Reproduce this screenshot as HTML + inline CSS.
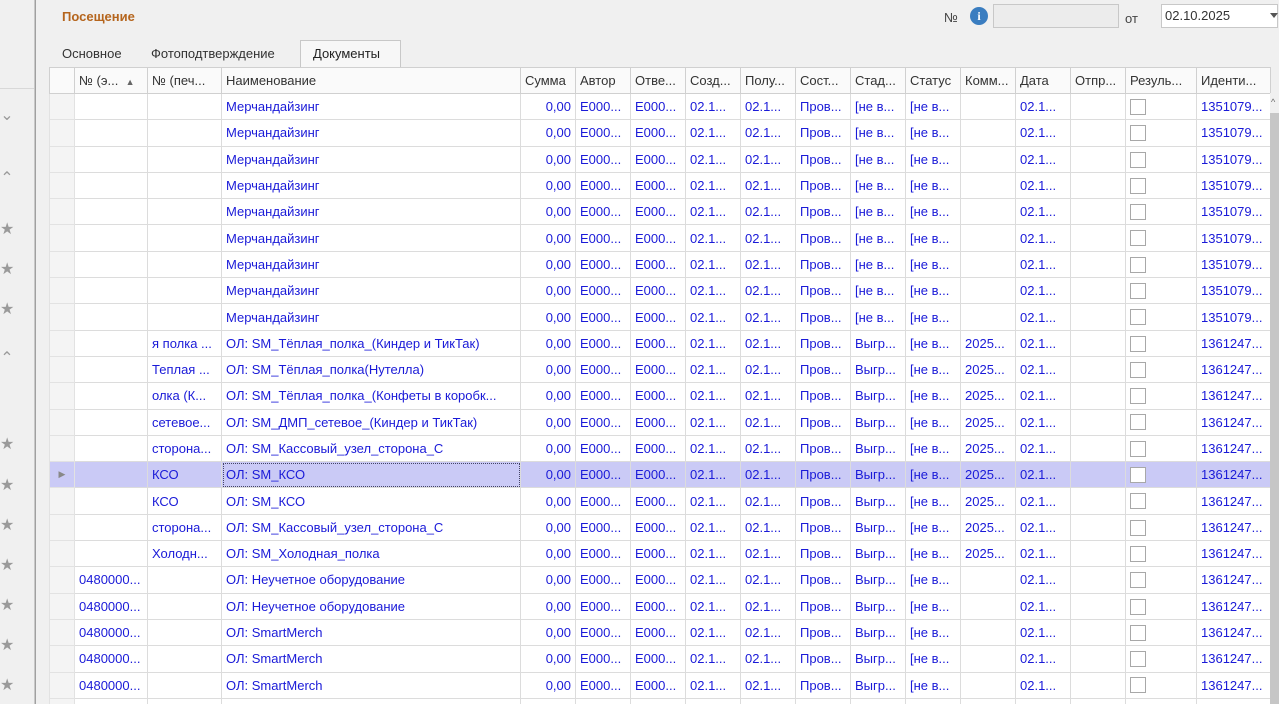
<!DOCTYPE html>
<html><head><meta charset="utf-8"><style>
html,body{margin:0;width:1279px;height:704px;overflow:hidden}
body{background:#f0f0f0;font-family:"Liberation Sans",sans-serif;font-size:13px;position:relative}
.side{position:absolute;left:0;top:0;width:34px;height:704px;background:#f0f0f0;border-right:1px solid #c8c8c8}
.side2{position:absolute;left:35px;top:0;width:1px;height:704px;background:#a0a0a0}
.ic{position:absolute;left:0;width:14px;text-align:center;color:#9a9a9a;font-size:16px}
.title{position:absolute;left:62px;top:9px;color:#b5651d;font-weight:bold;font-size:13px}
.lbl{position:absolute;color:#444}
.inp{position:absolute;background:#ececec;border:1px solid #c8c8c8}
.tab{position:absolute;top:41px;height:25px;line-height:25px;color:#333}
table{position:absolute;left:49px;top:67px;border-collapse:collapse;table-layout:fixed;width:1221px;background:#fff}
td,th{height:25.3px;border:1px solid #dcdcdc;padding:0 4px;white-space:nowrap;overflow:hidden;color:#1a1ad8;font-weight:normal;text-align:left}
th{background:#fafafa;color:#333;height:25px;border-color:#d0d0d0}
td.r{text-align:right}
td.h{background:#f4f4f4;border-color:#e2e2e2}
tr.sel td{background:#cacaf6}
tr.sel td.h{background:#cacaf6}
.cb{display:inline-block;width:14px;height:14px;border:1px solid #a8a8a8;background:#fff;vertical-align:middle}
.sb{position:absolute;left:1270px;top:93px;width:9px;height:611px;background:#f0f0f0}
.th{position:absolute;left:1270px;top:113px;width:9px;height:591px;background:#c6c6c6}
</style></head><body>
<div class="side"></div><div class="side2"></div>
<div class="ic" style="top:105px">&#8964;</div>
<div class="ic" style="top:168px">&#8963;</div>
<div class="ic" style="top:219px">★</div><div class="ic" style="top:259px">★</div><div class="ic" style="top:299px">★</div>
<div class="ic" style="top:348px">&#8963;</div>
<div class="ic" style="top:434px">★</div><div class="ic" style="top:475px">★</div><div class="ic" style="top:515px">★</div><div class="ic" style="top:555px">★</div><div class="ic" style="top:595px">★</div><div class="ic" style="top:635px">★</div><div class="ic" style="top:675px">★</div>
<div style="position:absolute;left:0;top:88px;width:34px;height:1px;background:#d8d8d8"></div>
<div class="title">Посещение</div>
<div class="lbl" style="left:944px;top:10px">№</div>
<div style="position:absolute;left:970px;top:7px;width:18px;height:18px;border-radius:50%;background:#3a7dc0;color:#fff;font-weight:bold;font-size:12px;text-align:center;line-height:18px;font-family:'Liberation Serif',serif">i</div>
<div class="inp" style="left:993px;top:4px;width:124px;height:22px"></div>
<div class="lbl" style="left:1125px;top:11px">от</div>
<div class="inp" style="left:1161px;top:4px;width:112px;height:22px;background:#fff;color:#333;line-height:22px;padding-left:3px">02.10.2025</div>
<div style="position:absolute;left:1270px;top:13px;border:4px solid transparent;border-top:5px solid #555"></div>
<div class="tab" style="left:62px">Основное</div>
<div class="tab" style="left:151px">Фотоподтверждение</div>
<div style="position:absolute;left:300px;top:40px;width:99px;height:27px;background:#f7f7f7;border:1px solid #c8c8c8;border-bottom:none"></div>
<div class="tab" style="left:313px;color:#222">Документы</div>
<table>
<colgroup><col style="width:25px"><col style="width:73px"><col style="width:74px"><col style="width:299px"><col style="width:55px"><col style="width:55px"><col style="width:55px"><col style="width:55px"><col style="width:55px"><col style="width:55px"><col style="width:55px"><col style="width:55px"><col style="width:55px"><col style="width:55px"><col style="width:55px"><col style="width:71px"><col style="width:74px"></colgroup>
<tr><th></th><th>№ (э... &nbsp;<span style="font-size:9px;color:#666">▲</span></th><th>№ (печ...</th><th>Наименование</th><th>Сумма</th><th>Автор</th><th>Отве...</th><th>Созд...</th><th>Полу...</th><th>Сост...</th><th>Стад...</th><th>Статус</th><th>Комм...</th><th>Дата</th><th>Отпр...</th><th>Резуль...</th><th>Иденти...</th></tr>
<tr><td class="h"></td><td></td><td></td><td>Мерчандайзинг</td><td class="r">0,00</td><td>Е000...</td><td>Е000...</td><td>02.1...</td><td>02.1...</td><td>Пров...</td><td>[не в...</td><td>[не в...</td><td></td><td>02.1...</td><td></td><td><span class="cb"></span></td><td>1351079...</td></tr>
<tr><td class="h"></td><td></td><td></td><td>Мерчандайзинг</td><td class="r">0,00</td><td>Е000...</td><td>Е000...</td><td>02.1...</td><td>02.1...</td><td>Пров...</td><td>[не в...</td><td>[не в...</td><td></td><td>02.1...</td><td></td><td><span class="cb"></span></td><td>1351079...</td></tr>
<tr><td class="h"></td><td></td><td></td><td>Мерчандайзинг</td><td class="r">0,00</td><td>Е000...</td><td>Е000...</td><td>02.1...</td><td>02.1...</td><td>Пров...</td><td>[не в...</td><td>[не в...</td><td></td><td>02.1...</td><td></td><td><span class="cb"></span></td><td>1351079...</td></tr>
<tr><td class="h"></td><td></td><td></td><td>Мерчандайзинг</td><td class="r">0,00</td><td>Е000...</td><td>Е000...</td><td>02.1...</td><td>02.1...</td><td>Пров...</td><td>[не в...</td><td>[не в...</td><td></td><td>02.1...</td><td></td><td><span class="cb"></span></td><td>1351079...</td></tr>
<tr><td class="h"></td><td></td><td></td><td>Мерчандайзинг</td><td class="r">0,00</td><td>Е000...</td><td>Е000...</td><td>02.1...</td><td>02.1...</td><td>Пров...</td><td>[не в...</td><td>[не в...</td><td></td><td>02.1...</td><td></td><td><span class="cb"></span></td><td>1351079...</td></tr>
<tr><td class="h"></td><td></td><td></td><td>Мерчандайзинг</td><td class="r">0,00</td><td>Е000...</td><td>Е000...</td><td>02.1...</td><td>02.1...</td><td>Пров...</td><td>[не в...</td><td>[не в...</td><td></td><td>02.1...</td><td></td><td><span class="cb"></span></td><td>1351079...</td></tr>
<tr><td class="h"></td><td></td><td></td><td>Мерчандайзинг</td><td class="r">0,00</td><td>Е000...</td><td>Е000...</td><td>02.1...</td><td>02.1...</td><td>Пров...</td><td>[не в...</td><td>[не в...</td><td></td><td>02.1...</td><td></td><td><span class="cb"></span></td><td>1351079...</td></tr>
<tr><td class="h"></td><td></td><td></td><td>Мерчандайзинг</td><td class="r">0,00</td><td>Е000...</td><td>Е000...</td><td>02.1...</td><td>02.1...</td><td>Пров...</td><td>[не в...</td><td>[не в...</td><td></td><td>02.1...</td><td></td><td><span class="cb"></span></td><td>1351079...</td></tr>
<tr><td class="h"></td><td></td><td></td><td>Мерчандайзинг</td><td class="r">0,00</td><td>Е000...</td><td>Е000...</td><td>02.1...</td><td>02.1...</td><td>Пров...</td><td>[не в...</td><td>[не в...</td><td></td><td>02.1...</td><td></td><td><span class="cb"></span></td><td>1351079...</td></tr>
<tr><td class="h"></td><td></td><td>я полка ...</td><td>ОЛ: SM_Тёплая_полка_(Киндер и ТикТак)</td><td class="r">0,00</td><td>Е000...</td><td>Е000...</td><td>02.1...</td><td>02.1...</td><td>Пров...</td><td>Выгр...</td><td>[не в...</td><td>2025...</td><td>02.1...</td><td></td><td><span class="cb"></span></td><td>1361247...</td></tr>
<tr><td class="h"></td><td></td><td>Теплая ...</td><td>ОЛ: SM_Тёплая_полка(Нутелла)</td><td class="r">0,00</td><td>Е000...</td><td>Е000...</td><td>02.1...</td><td>02.1...</td><td>Пров...</td><td>Выгр...</td><td>[не в...</td><td>2025...</td><td>02.1...</td><td></td><td><span class="cb"></span></td><td>1361247...</td></tr>
<tr><td class="h"></td><td></td><td>олка (К...</td><td>ОЛ: SM_Тёплая_полка_(Конфеты в коробк...</td><td class="r">0,00</td><td>Е000...</td><td>Е000...</td><td>02.1...</td><td>02.1...</td><td>Пров...</td><td>Выгр...</td><td>[не в...</td><td>2025...</td><td>02.1...</td><td></td><td><span class="cb"></span></td><td>1361247...</td></tr>
<tr><td class="h"></td><td></td><td>сетевое...</td><td>ОЛ: SM_ДМП_сетевое_(Киндер и ТикТак)</td><td class="r">0,00</td><td>Е000...</td><td>Е000...</td><td>02.1...</td><td>02.1...</td><td>Пров...</td><td>Выгр...</td><td>[не в...</td><td>2025...</td><td>02.1...</td><td></td><td><span class="cb"></span></td><td>1361247...</td></tr>
<tr><td class="h"></td><td></td><td>сторона...</td><td>ОЛ: SM_Кассовый_узел_сторона_С</td><td class="r">0,00</td><td>Е000...</td><td>Е000...</td><td>02.1...</td><td>02.1...</td><td>Пров...</td><td>Выгр...</td><td>[не в...</td><td>2025...</td><td>02.1...</td><td></td><td><span class="cb"></span></td><td>1361247...</td></tr>
<tr class="sel"><td class="h" style="color:#888;font-size:9px;text-align:center">▶</td><td></td><td>КСО</td><td style="outline:1px dotted #446;outline-offset:-2px">ОЛ: SM_КСО</td><td class="r">0,00</td><td>Е000...</td><td>Е000...</td><td>02.1...</td><td>02.1...</td><td>Пров...</td><td>Выгр...</td><td>[не в...</td><td>2025...</td><td>02.1...</td><td></td><td><span class="cb"></span></td><td>1361247...</td></tr>
<tr><td class="h"></td><td></td><td>КСО</td><td>ОЛ: SM_КСО</td><td class="r">0,00</td><td>Е000...</td><td>Е000...</td><td>02.1...</td><td>02.1...</td><td>Пров...</td><td>Выгр...</td><td>[не в...</td><td>2025...</td><td>02.1...</td><td></td><td><span class="cb"></span></td><td>1361247...</td></tr>
<tr><td class="h"></td><td></td><td>сторона...</td><td>ОЛ: SM_Кассовый_узел_сторона_С</td><td class="r">0,00</td><td>Е000...</td><td>Е000...</td><td>02.1...</td><td>02.1...</td><td>Пров...</td><td>Выгр...</td><td>[не в...</td><td>2025...</td><td>02.1...</td><td></td><td><span class="cb"></span></td><td>1361247...</td></tr>
<tr><td class="h"></td><td></td><td>Холодн...</td><td>ОЛ: SM_Холодная_полка</td><td class="r">0,00</td><td>Е000...</td><td>Е000...</td><td>02.1...</td><td>02.1...</td><td>Пров...</td><td>Выгр...</td><td>[не в...</td><td>2025...</td><td>02.1...</td><td></td><td><span class="cb"></span></td><td>1361247...</td></tr>
<tr><td class="h"></td><td>0480000...</td><td></td><td>ОЛ: Неучетное оборудование</td><td class="r">0,00</td><td>Е000...</td><td>Е000...</td><td>02.1...</td><td>02.1...</td><td>Пров...</td><td>Выгр...</td><td>[не в...</td><td></td><td>02.1...</td><td></td><td><span class="cb"></span></td><td>1361247...</td></tr>
<tr><td class="h"></td><td>0480000...</td><td></td><td>ОЛ: Неучетное оборудование</td><td class="r">0,00</td><td>Е000...</td><td>Е000...</td><td>02.1...</td><td>02.1...</td><td>Пров...</td><td>Выгр...</td><td>[не в...</td><td></td><td>02.1...</td><td></td><td><span class="cb"></span></td><td>1361247...</td></tr>
<tr><td class="h"></td><td>0480000...</td><td></td><td>ОЛ: SmartMerch</td><td class="r">0,00</td><td>Е000...</td><td>Е000...</td><td>02.1...</td><td>02.1...</td><td>Пров...</td><td>Выгр...</td><td>[не в...</td><td></td><td>02.1...</td><td></td><td><span class="cb"></span></td><td>1361247...</td></tr>
<tr><td class="h"></td><td>0480000...</td><td></td><td>ОЛ: SmartMerch</td><td class="r">0,00</td><td>Е000...</td><td>Е000...</td><td>02.1...</td><td>02.1...</td><td>Пров...</td><td>Выгр...</td><td>[не в...</td><td></td><td>02.1...</td><td></td><td><span class="cb"></span></td><td>1361247...</td></tr>
<tr><td class="h"></td><td>0480000...</td><td></td><td>ОЛ: SmartMerch</td><td class="r">0,00</td><td>Е000...</td><td>Е000...</td><td>02.1...</td><td>02.1...</td><td>Пров...</td><td>Выгр...</td><td>[не в...</td><td></td><td>02.1...</td><td></td><td><span class="cb"></span></td><td>1361247...</td></tr>
<tr><td class="h"></td><td>0480000...</td><td></td><td>ОЛ: SmartMerch</td><td class="r">0,00</td><td>Е000...</td><td>Е000...</td><td>02.1...</td><td>02.1...</td><td>Пров...</td><td>Выгр...</td><td>[не в...</td><td></td><td>02.1...</td><td></td><td><span class="cb"></span></td><td>1361247...</td></tr>
</table>
<div class="sb"></div><div class="th"></div>
<div style="position:absolute;left:1271px;top:97px;color:#666;font-size:9px">^</div>
</body></html>
